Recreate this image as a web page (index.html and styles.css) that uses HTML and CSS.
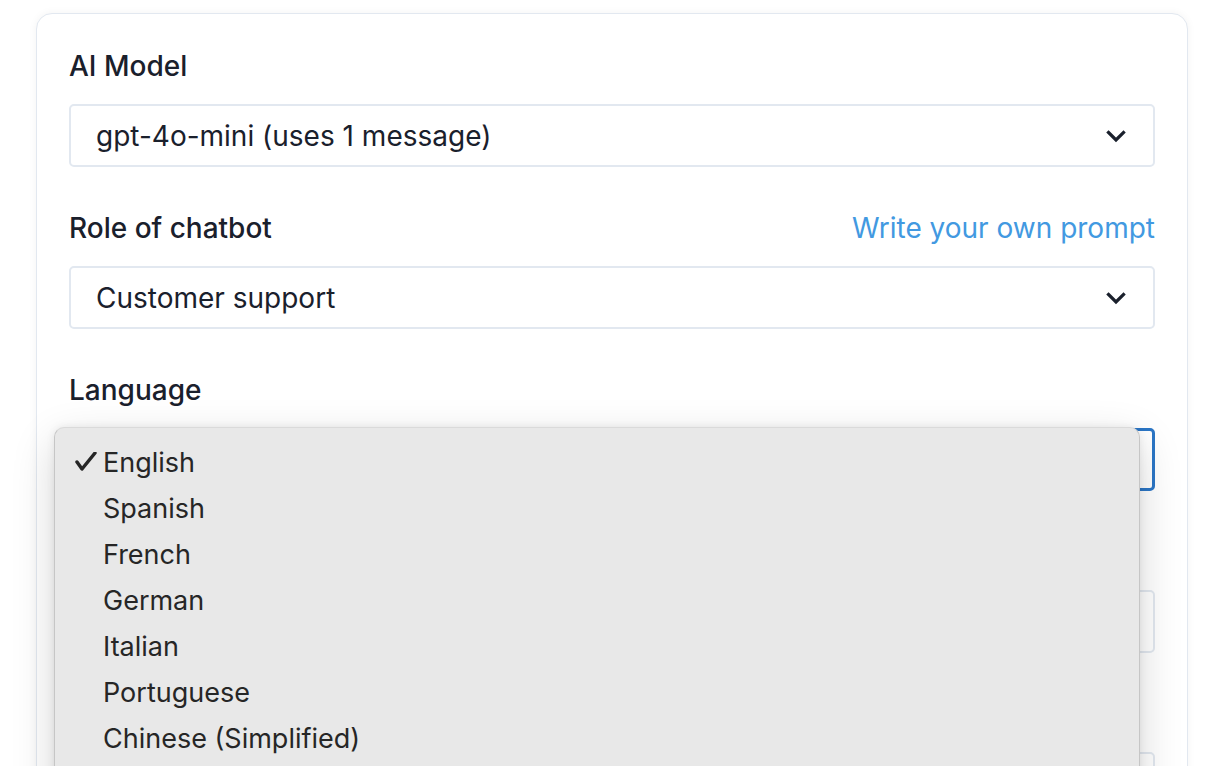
FILE: index.html
```html
<!DOCTYPE html>
<html lang="en">
<head>
    <meta charset="UTF-8">
    <meta name="viewport" content="width=device-width, initial-scale=1.0">
    <title>Chatbot Settings</title>
    <link rel="stylesheet" href="styles.css">
</head>
<body>
    <div class="page">
        <div class="card">

            <!-- AI model -->
            <div class="field">
                <div class="field-head">
                    <label class="field-label">AI Model</label>
                </div>
                <div class="select">
                    <span class="select-value">gpt-4o-mini (uses 1 message)</span>
                    <svg class="chevron" viewBox="0 0 24 24" width="24" height="24"><polyline points="4.5,8.5 12,16 19.5,8.5"/></svg>
                </div>
            </div>

            <!-- Role -->
            <div class="field">
                <div class="field-head">
                    <label class="field-label">Role of chatbot</label>
                    <a class="field-link" href="#">Write your own prompt</a>
                </div>
                <div class="select">
                    <span class="select-value">Customer support</span>
                    <svg class="chevron" viewBox="0 0 24 24" width="24" height="24"><polyline points="4.5,8.5 12,16 19.5,8.5"/></svg>
                </div>
            </div>

            <!-- Language, open dropdown -->
            <div class="field">
                <div class="field-head">
                    <label class="field-label">Language</label>
                </div>
                <div class="select-wrap">
                    <div class="select focused">
                        <span class="select-value">English</span>
                        <svg class="chevron" viewBox="0 0 24 24" width="24" height="24"><polyline points="4.5,8.5 12,16 19.5,8.5"/></svg>
                    </div>
                    <ul class="menu">
                        <li class="menu-item">
                            <svg class="check" viewBox="0 0 22 20" width="22" height="20"><polyline points="2,10 7,17 20,1"/></svg>
                            English
                        </li>
                        <li class="menu-item">Spanish</li>
                        <li class="menu-item">French</li>
                        <li class="menu-item">German</li>
                        <li class="menu-item">Italian</li>
                        <li class="menu-item">Portuguese</li>
                        <li class="menu-item">Chinese (Simplified)</li>
                        <li class="menu-item">Japanese</li>
                        <li class="menu-item">Korean</li>
                    </ul>
                </div>
            </div>

            <div class="field">
                <div class="field-head">
                    <label class="field-label">Tone</label>
                </div>
                <div class="select">
                    <span class="select-value">Friendly</span>
                    <svg class="chevron" viewBox="0 0 24 24" width="24" height="24"><polyline points="4.5,8.5 12,16 19.5,8.5"/></svg>
                </div>
            </div>

            <div class="field">
                <div class="field-head">
                    <label class="field-label">Response length</label>
                </div>
                <div class="select">
                    <span class="select-value">Medium</span>
                    <svg class="chevron" viewBox="0 0 24 24" width="24" height="24"><polyline points="4.5,8.5 12,16 19.5,8.5"/></svg>
                </div>
            </div>

        </div>
    </div>
</body>
</html>
```

FILE: styles.css
```css
body {
    margin: 0;
    font-family: Inter, "Noto Sans", Arial, sans-serif;
    background-color: #fff;
    color: #1a202c;
}

.page {
    padding: 13px 36px 40px 36px;
}

.card {
    background: #fff;
    border: 1px solid #e2e8f0;
    border-radius: 16px;
    box-shadow: 0 0 8px rgba(0, 0, 0, 0.05);
    padding: 33px 32px 40px 32px;
}

.field {
    margin-bottom: 42px;
}

.field-head {
    display: flex;
    justify-content: space-between;
    align-items: baseline;
    margin-bottom: 18px;
}

.field-label {
    font-size: 28px;
    line-height: 39px;
    font-weight: 500;
    color: #1a202c;
}

.field-link {
    font-size: 28px;
    line-height: 39px;
    color: #4299e1;
    text-decoration: none;
}

.select {
    height: 63px;
    box-sizing: border-box;
    border: 2px solid #e2e8f0;
    border-radius: 5px;
    display: flex;
    align-items: center;
    justify-content: space-between;
    padding: 0 25px 0 25px;
    font-size: 28px;
    color: #1a202c;
}

.chevron {
    fill: none;
    stroke: #1a202c;
    stroke-width: 3.2;
    stroke-linecap: square;
}

.select.focused {
    border: 3px solid #2b76c6;
}

.select-wrap {
    position: relative;
}

/* open option list lies over the focused select */
.menu {
    position: absolute;
    top: -1px;
    left: -15px;
    width: 1086px;
    margin: 0;
    padding: 12px 0 10px 0;
    list-style: none;
    background: #e8e8e8;
    border: 1px solid #c6c6c6;
    border-top-color: #dadada;
    border-radius: 10px;
    box-sizing: border-box;
    box-shadow: 0 14px 44px rgba(0, 0, 0, 0.16), 0 0 8px rgba(0, 0, 0, 0.08);
    z-index: 10;
}

.menu-item {
    height: 46px;
    line-height: 46px;
    padding-left: 48px;
    font-size: 27px;
    color: #262626;
    position: relative;
}

.check {
    position: absolute;
    left: 20px;
    top: 12px;
    fill: none;
    stroke: #262626;
    stroke-width: 3.4;
    stroke-linecap: round;
    stroke-linejoin: round;
}
```
